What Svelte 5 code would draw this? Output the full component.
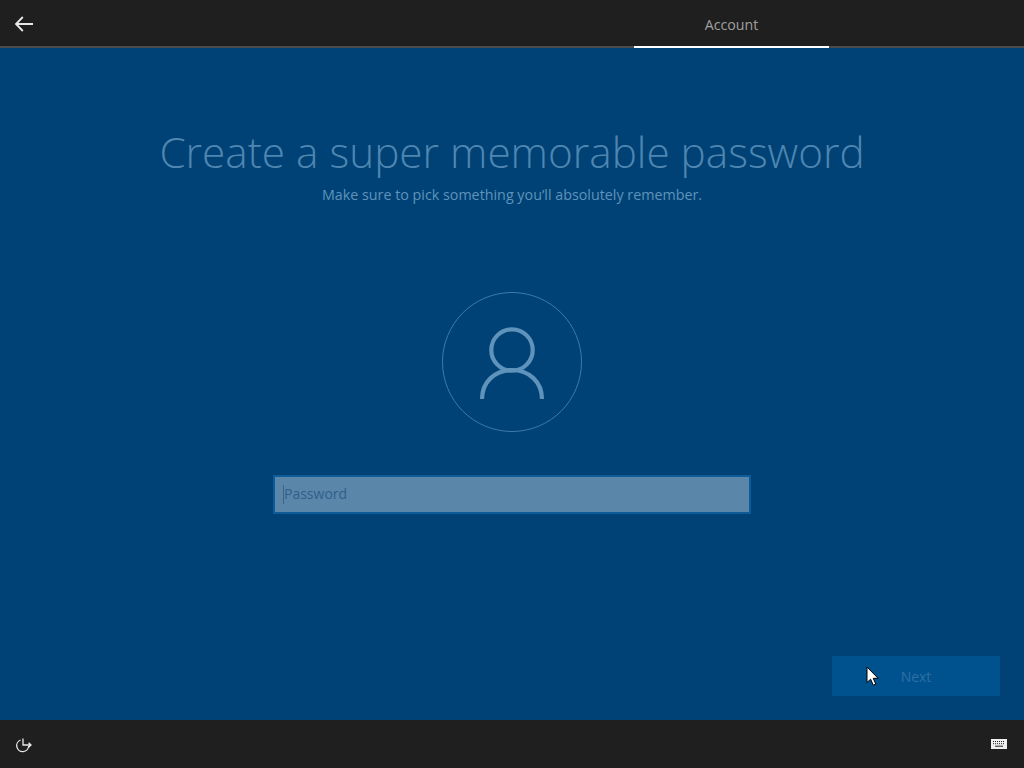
<script>
let password = "";
</script>

<div class="screen">
    <header class="topbar">
        <button class="back" aria-label="Back">
            <svg width="20" height="16" viewBox="0 0 20 16" fill="none" stroke="#e8e8e8" stroke-width="1.8">
                <path d="M19 8H2M8.8 1 2 8l6.8 7" />
            </svg>
        </button>
        <div class="tab">Account</div>
    </header>

    <main class="content">
        <h1>Create a super memorable password</h1>
        <p class="sub">Make sure to pick something you’ll absolutely remember.</p>

        <div class="avatar">
            <svg width="66" height="74" viewBox="0 0 66 74" fill="none" stroke="#5f93bb" stroke-width="4.2">
                <circle cx="33" cy="25" r="20.7" />
                <path d="M3 74C3 57 16 45 33 45S63 57 63 74" />
            </svg>
        </div>

        <div class="field">
            <span class="caret"></span>
            <input type="password" bind:value={password} placeholder="Password" />
        </div>

        <div class="actions">
            <button class="next">Next</button>
            <svg class="cursor" width="13" height="20" viewBox="0 0 13 20">
                <path d="M1 1v15.5l3.6-3.3 2.7 6 2.5-1.1-2.6-5.8h4.9z" fill="#fff" stroke="#000" stroke-width="1" />
            </svg>
        </div>
    </main>

    <footer class="bottombar">
        <svg class="restart" width="17" height="16" viewBox="0 0 17 16" fill="none" stroke="#e8e8e8" stroke-width="1.3">
            <path d="M5.6 3A6 6 0 1 0 13.7 9" />
            <path d="M8 1.5V8h8M13.6 5.8 16 8l-2.4 2.2" />
        </svg>
        <svg width="16" height="10" viewBox="0 0 16 10">
            <rect x="0.5" y="0.5" width="15" height="9" fill="#f0f0f0" stroke="#f0f0f0" />
            <path d="M2 2.5h12M2 4.7h12" stroke="#1f1f1f" stroke-width="1" stroke-dasharray="1 1" />
            <path d="M4 7.2h8" stroke="#1f1f1f" stroke-width="1" />
        </svg>
    </footer>
</div>

<style>
:global(body) {
    background: #004275;
}

.screen {
    display: flex;
    flex-direction: column;
    width: 1024px;
    height: 768px;
    overflow: hidden;
    font-family: "Open Sans", "Noto Sans", sans-serif;
}

.topbar {
    display: flex;
    justify-content: space-between;
    flex: none;
    height: 46px;
    padding: 0 195px 0 14px;
    background: #1f1f1f;
    border-bottom: 2px solid #4b4b4b;
}

.back {
    display: flex;
    align-items: center;
    padding: 1px 0 0;
    background: none;
    border: 0;
}

.tab {
    width: 195px;
    height: 46px;
    margin-bottom: -2px;
    border-bottom: 2px solid #fff;
    font-size: 14.2px;
    line-height: 50px;
    text-align: center;
    color: #a0a0a0;
}

.content {
    flex: 1;
    display: flex;
    flex-direction: column;
    align-items: center;
    background: #004275;
}

h1 {
    margin: 74px 0 0;
    font-size: 42.3px;
    font-weight: 300;
    line-height: 60px;
    color: #4f86b1;
}

.sub {
    margin: 3px 0 0;
    font-size: 14.3px;
    line-height: 20px;
    color: #5f93bb;
}

.avatar {
    display: flex;
    align-items: center;
    justify-content: center;
    box-sizing: border-box;
    width: 140px;
    height: 140px;
    margin-top: 87px;
    border: 1px solid #3f7aa8;
    border-radius: 50%;
}

.field {
    position: relative;
    box-sizing: border-box;
    width: 478px;
    height: 39px;
    margin-top: 43px;
    background: #5a86aa;
    border: 2px solid #0d5c99;
}

.field input {
    box-sizing: border-box;
    width: 100%;
    height: 100%;
    padding: 0 9px 2px;
    background: none;
    border: 0;
    outline: 0;
    font: 14px "Open Sans", "Noto Sans", sans-serif;
}

.field input::placeholder {
    color: #2f5f8a;
    opacity: 1;
}

.caret {
    position: absolute;
    left: 8px;
    top: 8px;
    width: 1px;
    height: 19px;
    background: #42617d;
}

.actions {
    position: relative;
    align-self: flex-end;
    margin: 142px 24px 0 0;
}

.next {
    display: block;
    width: 168px;
    height: 40px;
    background: #00528f;
    border: 0;
    font: 14px "Open Sans", "Noto Sans", sans-serif;
    color: #2e6fa3;
}

.cursor {
    position: absolute;
    left: 34px;
    top: 10px;
}

.bottombar {
    display: flex;
    align-items: center;
    justify-content: space-between;
    flex: none;
    height: 48px;
    padding: 0 17px 0 15px;
    background: #1f1f1f;
}

.restart {
    margin-top: 2px;
}
</style>
